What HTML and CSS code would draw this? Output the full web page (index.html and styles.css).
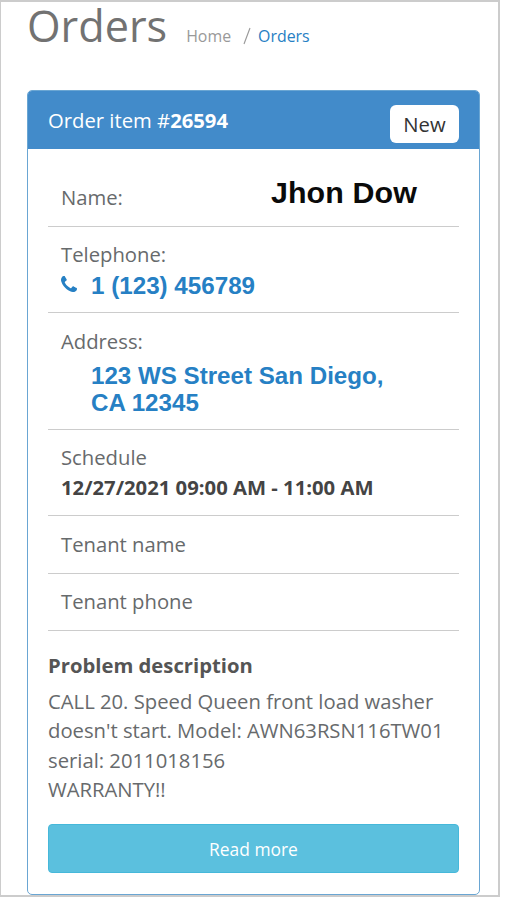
FILE: index.html
```html
<!DOCTYPE html>
<html lang="en">
<head>
<meta charset="utf-8">
<title>Orders</title>
<link rel="stylesheet" href="styles.css">
</head>
<body>
<main class="screen">
  <header class="page-head">
    <h1>Orders</h1>
    <nav class="crumbs"><span>Home</span><svg class="slash" viewBox="0 0 8 18"><path d="M7 1 1 17"/></svg><a>Orders</a></nav>
  </header>
  <section class="card">
    <div class="card-head">
      <div class="card-title">Order item #<b>26594</b></div>
      <span class="badge">New</span>
    </div>
    <div class="card-body">
      <div class="row name"><span class="label">Name:</span><span class="customer">Jhon Dow</span></div>
      <div class="row phone">
        <div class="label">Telephone:</div>
        <a class="tel"><svg class="phone-icon" viewBox="0 0 1408 1408"><path d="M1408 1112q0 27-10 70.500t-21 68.500q-21 50-122 106-94 51-186 51-27 0-53-3.500t-57.500-12.500-47-14.500-55.500-20.500-49-18q-98-35-175-83-127-79-264-216t-216-264q-48-77-83-175-3-9-18-49t-20.500-55.500-14.500-47-12.500-57.500-3.500-53q0-92 51-186 56-101 106-122 25-11 68.500-21t70.500-10q14 0 21 3 18 6 53 76 11 19 30 54t35 63.500 31 53.500q3 4 17.500 25t21.500 35.500 7 28.500q0 20-28.500 50t-62 55-62 53-28.500 46q0 9 5 22.500t8.500 20.500 14 24 11.500 19q76 137 174 235t235 174q2 1 19 11.500t24 14 20.500 8.500 22.500 5q18 0 46-28.500t53-62 55-62 50-28.500q14 0 28.500 7t35.500 21.500 25 17.500q25 15 53.500 31t63.500 35 54 30q70 35 76 53 3 7 3 21z"/></svg><span>1 (123) 456789</span></a>
      </div>
      <div class="row address"><div class="label">Address:</div><a class="place">123 WS Street San Diego,<br>CA 12345</a></div>
      <div class="row schedule"><div class="label">Schedule</div><div class="time">12/27/2021 09:00 AM - 11:00 AM</div></div>
      <div class="row tenant"><span class="label">Tenant name</span></div>
      <div class="row tenant"><span class="label">Tenant phone</span></div>
      <h2>Problem description</h2>
      <p>CALL 20. Speed Queen front load washer<br>doesn't start. Model: AWN63RSN116TW01<br>serial: 2011018156<br>WARRANTY!!</p>
      <button>Read more</button>
    </div>
  </section>
</main>
</body>
</html>
```
FILE: styles.css
```css
* { box-sizing: border-box; }
body { margin: 0; background: #fff; color: #676a6c; font-family: "Open Sans", sans-serif; font-size: 20.25px; }
.screen { width: 500px; height: 897px; border: 2px solid #ccc; border-left-width: 1px; padding: 0 18px 0 26px; }
.page-head { display: flex; height: 88px; }
h1 { margin: 0; font-size: 43.2px; font-weight: 400; line-height: 48px; color: #727272; }
.crumbs { display: flex; margin: 21px 0 0 19px; font-size: 15.9px; line-height: 26px; color: #999; }
.slash { width: 8px; height: 18px; margin: 4px 7px 0 12px; fill: none; stroke: #999; stroke-width: 1.1; }
a { color: #2680c4; }
.card { border: 1px solid #6aa6d3; border-radius: 5px; height: 805px; }
.card-head { display: flex; justify-content: space-between; height: 58px; padding: 14px 20px 0; background: #428bca; color: #fff; border-radius: 4px 4px 0 0; }
.card-title { line-height: 30px; }
.badge { width: 69px; height: 38px; border-radius: 6px; background: #fff; color: #333; text-align: center; line-height: 38px; }
.card-body { padding: 19px 20px 0; }
.row { border-bottom: 1px solid #ccc; padding: 0 13px; line-height: 30px; }
.name { display: flex; height: 59px; padding-top: 14px; }
.customer { font: bold 30.400px/38px "Liberation Sans", sans-serif; letter-spacing: .1px; color: #0a0a0a; margin: -9px 0 0 148px; white-space: nowrap; }
.phone { height: 86px; padding-top: 12px; }
.tel { display: flex; align-items: center; font: bold 24.2px/34px "Liberation Sans", sans-serif; }
.phone-icon { width: 16px; height: 16px; fill: currentColor; margin: -4px 14px 0 0; }
.address { height: 117px; padding-top: 13px; }
.place { display: block; margin: 6px 0 0 30px; font: bold 24.150px/27px "Liberation Sans", sans-serif; white-space: nowrap; }
.schedule { height: 86px; padding-top: 12px; }
.time { font-weight: 700; color: #444; white-space: nowrap; line-height: 31px; }
.tenant { height: 57.500px; padding-top: 12.500px; }
h2 { margin: 19px 0 7px; font-size: 20.25px; line-height: 30px; color: #555; }
p { margin: 0 0 20px; line-height: 29.300px; white-space: nowrap; }
button { display: block; width: 100%; height: 49px; border: 1px solid #46b8da; border-radius: 4px; background: #5bc0de; color: #fff; font: 17.4px "Open Sans", sans-serif; }
```
